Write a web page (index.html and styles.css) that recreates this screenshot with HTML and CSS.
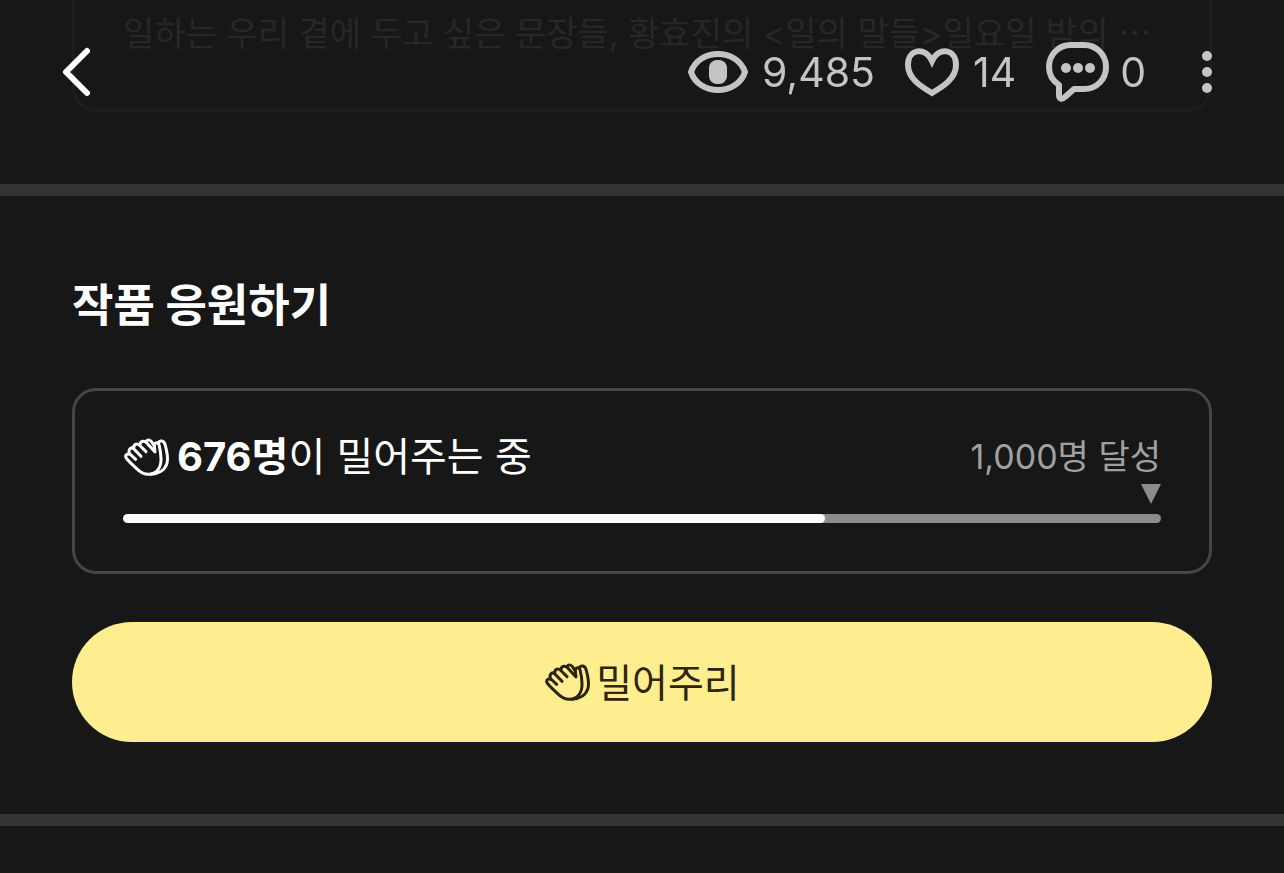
FILE: index.html
```html
<!DOCTYPE html>
<html lang="ko">
<head>
    <meta charset="UTF-8">
    <meta name="viewport" content="width=device-width, initial-scale=1.0">
    <title>작품 응원하기</title>
    <link rel="stylesheet" href="styles.css">
</head>
<body>
    <!-- Icon shared by the support card and the button -->
    <svg class="icon-defs" aria-hidden="true">
        <symbol id="clap" viewBox="12 18 138 114">
            <g fill="none" stroke="currentColor" stroke-width="9" stroke-linecap="round" stroke-linejoin="round">
                <path d="M50 82 L36 69 C28 62 16 68 21 77 C28 88 40 97 52 109 C62 119 72 127 88 127 C112 127 127 108 126 80 C126 64 123 50 120 38 C117 29 105 32 106 41 L108 60 L84 34 C77 25 65 26 63 37"/>
                <path d="M31 65 C27 50 38 42 47 53 L66 73"/>
                <path d="M44 50 C43 35 56 32 64 42 L81 59"/>
                <path d="M80 29 C87 21 95 24 99 31 L106 42"/>
                <path d="M117 33 C122 23 135 26 138 37 C144 58 149 80 143 97 C137 114 119 126 96 127"/>
            </g>
        </symbol>
    </svg>

    <header class="top-bar">
        <a href="#" class="back-link" aria-label="뒤로">
            <svg width="32" height="50" viewBox="0 0 32 50" fill="none" stroke="currentColor" stroke-width="6" stroke-linecap="round" stroke-linejoin="round">
                <path d="M27 4 L6 25 L27 46"/>
            </svg>
        </a>
        <div class="stats">
            <div class="stat">
                <svg width="60" height="44" viewBox="0 0 60 44" aria-hidden="true">
                    <path d="M3 22 C11 -2 49 -2 57 22 C49 46 11 46 3 22 Z" fill="none" stroke="currentColor" stroke-width="6" stroke-linejoin="round"/>
                    <rect x="21" y="10" width="18" height="24" rx="8" fill="currentColor"/>
                </svg>
                <span>9,485</span>
            </div>
            <button class="stat stat-button">
                <svg width="54" height="50" viewBox="0 0 54 50" fill="none" stroke="currentColor" stroke-width="6" aria-hidden="true">
                    <path d="M27 14 C20 -1 3 2 3 18 C3 31 15 39 27 46 C39 39 51 31 51 18 C51 2 34 -1 27 14 Z"/>
                </svg>
                <span>14</span>
            </button>
            <button class="stat stat-button comments">
                <svg width="64" height="60" viewBox="0 0 64 60" aria-hidden="true">
                    <path d="M25 3 H38 C51 3 60 13 60 25 C60 37 51 47 38 47 H28 L19 55 C16 58 13 57 13 53 V43 C7 39 3 33 3 25 C3 13 12 3 25 3 Z" fill="none" stroke="currentColor" stroke-width="6" stroke-linejoin="round"/>
                    <g fill="currentColor">
                        <circle cx="20" cy="26" r="5"/>
                        <circle cx="32" cy="26" r="5"/>
                        <circle cx="44" cy="26" r="5"/>
                    </g>
                </svg>
                <span>0</span>
            </button>
            <button class="more-button" aria-label="더보기">
                <svg width="10" height="44" viewBox="0 0 10 44" fill="currentColor">
                    <circle cx="5" cy="6" r="5"/>
                    <circle cx="5" cy="22" r="5"/>
                    <circle cx="5" cy="38" r="5"/>
                </svg>
            </button>
        </div>
    </header>

    <main>
        <section class="preview">
            <div class="preview-card">
                <p class="preview-text">일하는 우리 곁에 두고 싶은 문장들, 황효진의 &lt;일의 말들&gt;일요일 밤의 ⋯</p>
            </div>
        </section>

        <section class="support">
            <h2 class="support-title">작품 응원하기</h2>

            <div class="support-card">
                <div class="support-row">
                    <p class="support-count">
                        <svg class="clap-icon" aria-hidden="true"><use href="#clap"/></svg>
                        <span><strong>676명</strong>이 밀어주는 중</span>
                    </p>
                    <p class="support-goal">1,000명 달성</p>
                </div>
                <svg class="goal-marker" viewBox="0 0 20 20" aria-hidden="true"><path d="M0 0 H20 L10 20 Z" fill="currentColor"/></svg>
                <div class="progress" role="progressbar" aria-valuemin="0" aria-valuemax="1000" aria-valuenow="676" aria-label="응원 인원">
                    <div class="progress-fill" style="width: 67.6%"></div>
                </div>
            </div>

            <button class="push-button">
                <svg class="clap-icon" aria-hidden="true"><use href="#clap"/></svg>
                <span>밀어주리</span>
            </button>
        </section>
    </main>
</body>
</html>
```
FILE: styles.css
```css
* {
    box-sizing: border-box;
    margin: 0;
    padding: 0;
}

body {
    font-family: Inter, "Noto Sans CJK KR", sans-serif;
    font-weight: 400;
    background-color: #171717;
    color: #fff;
}

button {
    font: inherit;
    color: inherit;
    background: none;
    border: none;
    cursor: pointer;
}

svg {
    display: block;
    flex-shrink: 0;
}

.icon-defs {
    position: absolute;
    width: 0;
    height: 0;
}

/* Header floats over the scrolling content */
.top-bar {
    position: fixed;
    top: 0;
    left: 0;
    right: 0;
    z-index: 1;
    height: 144px;
    padding: 0 72px 0 60px;
    display: flex;
    justify-content: space-between;
    align-items: center;
}

.back-link {
    color: #fff;
}

.stats {
    display: flex;
    align-items: center;
    gap: 30px;
    color: #c4c4c4;
    font-size: 41px;
    line-height: 60px;
}

.stat {
    display: flex;
    align-items: center;
    gap: 14px;
}

.comments {
    gap: 10px;
}

.more-button {
    margin-left: 26px;
}

.preview {
    padding: 0 72px 72px;
    border-bottom: 12px solid #333;
}

.preview-card {
    height: 112px;
    padding: 8px 48px;
    border: 3px solid #1d1d1d;
    border-top: none;
    border-radius: 0 0 24px 24px;
}

.preview-text {
    overflow: hidden;
    white-space: nowrap;
    color: #272727;
    font-size: 34px;
    line-height: 52px;
}

.support {
    padding: 74px 72px 72px;
    border-bottom: 12px solid #333;
}

.support-title {
    margin-bottom: 46px;
    font-size: 45px;
    font-weight: 700;
    line-height: 72px;
}

.support-card {
    margin-bottom: 48px;
    padding: 38px 48px 48px;
    border: 3px solid #454547;
    border-radius: 24px;
}

.support-row {
    display: flex;
    justify-content: space-between;
    align-items: center;
}

.support-count {
    display: flex;
    align-items: center;
    gap: 8px;
    font-size: 40px;
    line-height: 55px;
}

.support-count strong {
    font-weight: 700;
}

.clap-icon {
    width: 46px;
    height: 38px;
}

.support-goal {
    color: #a0a0a0;
    font-size: 34px;
    line-height: 55px;
}

.goal-marker {
    width: 20px;
    height: 20px;
    margin-left: auto;
    margin-bottom: 10px;
    color: #8c8c8c;
}

.progress {
    height: 9px;
    border-radius: 5px;
    background: #8c8c8c;
    overflow: hidden;
}

.progress-fill {
    height: 100%;
    border-radius: 5px;
    background: #fff;
}

.push-button {
    width: 100%;
    height: 120px;
    display: flex;
    justify-content: center;
    align-items: center;
    gap: 6px;
    border-radius: 60px;
    background: #ffee8f;
    color: #2c2510;
    font-size: 39px;
    line-height: 57px;
}
```
